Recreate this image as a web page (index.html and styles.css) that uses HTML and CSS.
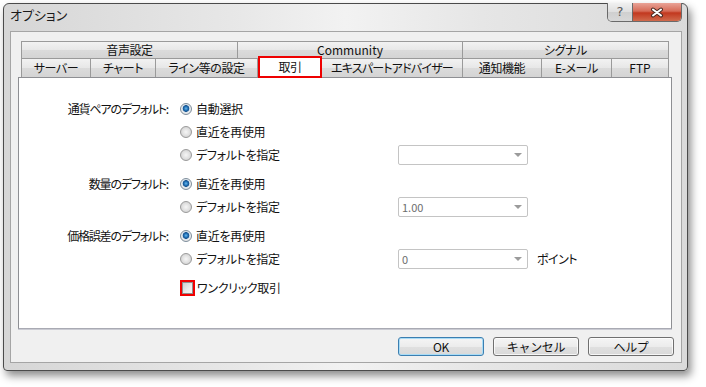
FILE: index.html
```html
<!DOCTYPE html>
<html lang="ja">
<head>
<meta charset="utf-8">
<title>オプション</title>
<link rel="stylesheet" href="styles.css">
</head>
<body>
<div class="window">
  <div class="titlebar">
    <span class="title">オプション</span>
    <div class="caption-btns">
      <span class="cap-help">?</span>
      <span class="cap-close"><svg width="14" height="11" viewBox="0 0 14 11"><path d="M3 2.5 L11 8.5 M11 2.5 L3 8.5" stroke="#4a2a22" stroke-width="4" stroke-linecap="round" fill="none"/><path d="M3 2.5 L11 8.5 M11 2.5 L3 8.5" stroke="#fff" stroke-width="2" stroke-linecap="round" fill="none"/></svg></span>
    </div>
  </div>
  <div class="client">
    <div class="tabs">
      <div class="tabrow row1">
        <div class="tab first t-sound">音声設定</div>
        <div class="tab t-comm">Community</div>
        <div class="tab t-sig">シグナル</div>
      </div>
      <div class="tabrow row2">
        <div class="tab first t-server">サーバー</div>
        <div class="tab t-chart">チャート</div>
        <div class="tab t-line">ライン等の設定</div>
        <div class="tab selected t-trade">取引</div>
        <div class="tab t-ea">エキスパートアドバイザー</div>
        <div class="tab t-notify">通知機能</div>
        <div class="tab t-mail">E-メール</div>
        <div class="tab t-ftp">FTP</div>
      </div>
    </div>
    <div class="panel">
      <div class="group">
        <div class="lbl">通貨ペアのデフォルト:</div>
        <div class="opt"><span class="radio on"></span><span>自動選択</span></div>
        <div></div><div></div>
        <div></div>
        <div class="opt"><span class="radio"></span><span>直近を再使用</span></div>
        <div></div><div></div>
        <div></div>
        <div class="opt"><span class="radio"></span><span>デフォルトを指定</span></div>
        <div class="dd"><span></span></div>
        <div></div>
      </div>
      <div class="group">
        <div class="lbl">数量のデフォルト:</div>
        <div class="opt"><span class="radio on"></span><span>直近を再使用</span></div>
        <div></div><div></div>
        <div></div>
        <div class="opt"><span class="radio"></span><span>デフォルトを指定</span></div>
        <div class="dd"><span>1.00</span></div>
        <div></div>
      </div>
      <div class="group">
        <div class="lbl">価格誤差のデフォルト:</div>
        <div class="opt"><span class="radio on"></span><span>直近を再使用</span></div>
        <div></div><div></div>
        <div></div>
        <div class="opt"><span class="radio"></span><span>デフォルトを指定</span></div>
        <div class="dd"><span>0</span></div>
        <div class="unit">ポイント</div>
      </div>
      <div class="group">
        <div></div>
        <div class="opt opt-chk"><span class="chk"></span><span>ワンクリック取引</span></div>
        <div></div><div></div>
      </div>
    </div>
    <div class="actions">
      <button class="btn default">OK</button>
      <button class="btn">キャンセル</button>
      <button class="btn">ヘルプ</button>
    </div>
  </div>
</div>
</body>
</html>
```
FILE: styles.css
```css
* { box-sizing: border-box; margin: 0; padding: 0; }
html, body { background: #fff; }
body {
  width: 706px;
  height: 387px;
  overflow: hidden;
  padding: 3px 0 0 3px;
  font-family: "Noto Sans CJK JP", "Noto Sans", sans-serif;
  font-size: 12px;
  color: #111;
  font-feature-settings: "palt";
}
.window {
  width: 685px;
  height: 368px;
  border: 1px solid #4b4b4b;
  border-radius: 6px 6px 4px 4px;
  background: linear-gradient(90deg, #d6d6d6 0%, #e8e8e8 35%, #f2f2f2 50%, #e6e6e6 70%, #dadada 100%);
  box-shadow: 3px 5px 9px rgba(0,0,0,.45);
  padding: 0 5px 7px 6px;
  display: flex;
  flex-direction: column;
}
.titlebar {
  height: 27px;
  display: flex;
  align-items: flex-start;
  justify-content: space-between;
}
.title {
  font-size: 13px;
  line-height: 22px;
  color: #1a1a1a;
}
.caption-btns {
  display: flex;
  margin-top: -1px;
  height: 19px;
  border: 1px solid #6a6a6a;
  border-top: none;
  border-radius: 0 0 5px 5px;
  overflow: hidden;
}
.cap-help {
  width: 25px;
  border-right: 1px solid #6a6a6a;
  background: linear-gradient(#f0f0f0, #dedede 50%, #cfcfcf 51%, #d8d8d8);
  text-align: center;
  font-family: "DejaVu Sans", sans-serif;
  font-size: 13px;
  line-height: 18px;
  color: #5a5a5a;
}
.cap-close {
  width: 48px;
  background: linear-gradient(#e9a397, #d66b57 45%, #c2381f 55%, #d06a4c);
  display: flex;
  align-items: center;
  justify-content: center;
}
.client {
  height: 332px;
  border: 1px solid #a5a5a5;
  background: #f0f0f0;
  padding-top: 9px;
}
.tabs { margin: 0 12px 0 10px; }
.tabrow { display: flex; }
.row1 { height: 17px; }
.row2 { height: 19px; align-items: flex-start; }
.tab {
  flex-shrink: 0;
  border-top: 1px solid #9a9a9a;
  border-right: 1px solid #9a9a9a;
  background: linear-gradient(#f2f2f2, #e7e7e7 50%, #dbdbdb 51%, #d4d4d4);
  text-align: center;
  white-space: nowrap;
  letter-spacing: -0.4px;
}
.tab.first { border-left: 1px solid #9a9a9a; }
.row1 .tab { height: 17px; line-height: 16px; }
.row2 .tab { height: 19px; line-height: 18px; }
.t-sound { width: 217px; }
.t-comm { width: 225px; letter-spacing: 0; }
.t-sig { width: 206px; }
.t-server { width: 70px; }
.t-chart { width: 65px; }
.t-line { width: 102px; }
.t-trade { width: 64px; }
.t-ea { width: 141px; letter-spacing: -0.8px; }
.t-notify { width: 79px; }
.t-mail { width: 70px; }
.t-ftp { width: 57px; letter-spacing: 0; }
.row2 .tab.selected {
  position: relative;
  z-index: 1;
  height: 22px;
  margin-top: -2px;
  border: 2px solid #ee0000;
  background: #fff;
  line-height: 17px;
}
.panel {
  margin: 0 9px 0 7px;
  height: 252px;
  border: 1px solid #8e8f93;
  border-bottom-color: #a9aab3;
  box-shadow: 0 1px 0 #c9cad2;
  background: #fff;
  padding-top: 19px;
}
.group {
  display: grid;
  grid-template-columns: 153px 226px 130px auto;
  grid-auto-rows: 23px;
  align-items: center;
}
.group + .group { margin-top: 6px; }
.lbl {
  text-align: right;
  padding-right: 4px;
  white-space: nowrap;
  letter-spacing: -1.2px;
}
.opt {
  display: flex;
  align-items: center;
  gap: 4px;
  padding-left: 8px;
  white-space: nowrap;
  letter-spacing: -0.3px;
}
.radio {
  width: 12px;
  height: 12px;
  border-radius: 50%;
  border: 1px solid #9a9a9a;
  background: radial-gradient(circle at 50% 50%, #f6f6f6 0, #e4e4e4 3px, #cfcfcf 6px);
}
.radio.on {
  border-color: #7e8e9c;
  background: radial-gradient(circle at 50% 45%, #6ab6ea 0, #1e6fb5 2px, #17508a 3px, #c9dced 3.6px, #eeeeee 4.5px, #d6d6d6 6px);
}
.opt-chk { gap: 2px; }
.chk {
  width: 15px;
  height: 16px;
  border: 2px solid #f00000;
  background: linear-gradient(135deg, #c9c9c9, #ececec 60%, #f7f7f7);
  box-shadow: inset 0 0 0 1px #8f8f8f;
}
.dd {
  height: 20px;
  border: 1px solid #c4c4c4;
  border-radius: 2px;
  background: #fff;
  display: flex;
  align-items: center;
  justify-content: space-between;
  padding: 0 5px 0 3px;
  color: #6d6d6d;
  font-size: 11px;
}
.dd::after {
  content: "";
  border-left: 4px solid transparent;
  border-right: 4px solid transparent;
  border-top: 4px solid #9b9b9b;
}
.unit { padding-left: 9px; white-space: nowrap; letter-spacing: -0.5px; }
.actions {
  display: flex;
  justify-content: flex-end;
  gap: 9px;
  margin-top: 8px;
  padding-right: 7px;
}
.btn {
  width: 86px;
  height: 19px;
  border: 1px solid #707070;
  border-radius: 3px;
  background: linear-gradient(#f5f5f5, #ececec 50%, #e0e0e0 51%, #d9d9d9);
  box-shadow: inset 0 0 0 1px rgba(255,255,255,.75);
  font-family: inherit;
  font-size: 12px;
  line-height: 17px;
  color: #111;
  text-align: center;
  letter-spacing: -0.3px;
}
.btn.default {
  border-color: #3c7fb1;
  box-shadow: inset 0 0 0 1px #a9dcf6;
}
```
